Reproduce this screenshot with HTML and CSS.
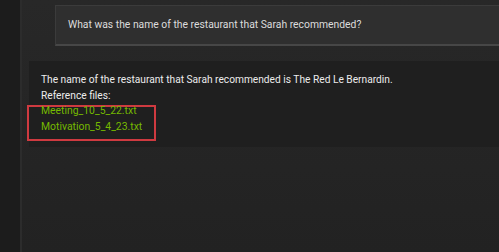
FILE: index.html
```html
<!DOCTYPE html>
<html>
<head>
<meta charset="utf-8">
<link rel="stylesheet" href="styles.css">
</head>
<body>
<div class="app">
  <div class="rail"></div>
  <div class="main">
    <div class="question-row">
      <div class="question">What was the name of the restaurant that Sarah recommended?</div>
    </div>
    <div class="answer">
      <div class="line">The name of the restaurant that Sarah recommended is The Red Le Bernardin.</div>
      <div class="line">Reference files:</div>
      <div class="refs">
        <div class="ref">Meeting_10_5_22.txt</div>
        <div class="ref">Motivation_5_4_23.txt</div>
      </div>
    </div>
  </div>
</div>
</body>
</html>
```
FILE: styles.css
```css
html, body {
  margin: 0;
  padding: 0;
  width: 499px;
  height: 252px;
  overflow: hidden;
  background: #262626;
}
.app {
  display: flex;
  height: 252px;
  font-family: Roboto, sans-serif;
}
.rail {
  width: 20px;
  flex: none;
  background: #1c1c1c;
  border-right: 2px solid #2c2c2c;
}
.main {
  flex: 1;
  background: linear-gradient(#282828, #222222);
  padding-top: 5px;
  padding-left: 7px;
  min-width: 0;
}
.question-row {
  padding-left: 26px;
}
.question {
  background: #2f2f2f;
  border: 1px solid #3b3b3b;
  border-bottom: 2px solid #474747;
  border-right: none;
  color: #dcdcdc;
  font-size: 10.35px;
  height: 38px;
  line-height: 38px;
  padding-left: 12px;
}
.answer {
  margin-top: 15px;
  background: #1f1f1f;
  height: 86px;
  padding: 11px 0 0 12px;
  box-sizing: border-box;
  color: #ececec;
  font-size: 10.2px;
}
.line {
  line-height: 16px;
}
.refs {
  margin-top: 1px;
  margin-left: -14px;
  width: 113px;
  border: 2px solid #cf3a40;
  padding: 0 0 4px 12px;
}
.ref {
  color: #76b900;
  font-size: 10.4px;
  line-height: 16px;
}
.ref:first-child {
  margin-top: -4px;
}
```
